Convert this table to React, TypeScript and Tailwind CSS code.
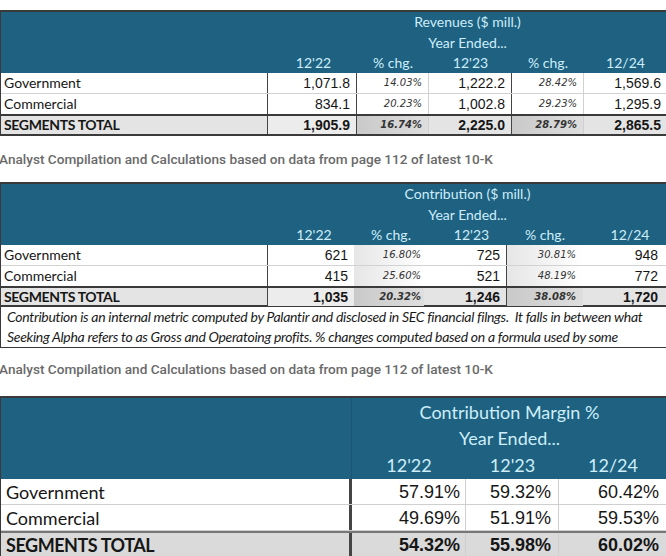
import React from "react";

type Row = { label: string; vals: string[]; pcts: string[] };

const revenues: Row[] = [
  { label: "Government", vals: ["1,071.8", "1,222.2", "1,569.6"], pcts: ["14.03%", "28.42%"] },
  { label: "Commercial", vals: ["834.1", "1,002.8", "1,295.9"], pcts: ["20.23%", "29.23%"] },
  { label: "SEGMENTS TOTAL", vals: ["1,905.9", "2,225.0", "2,865.5"], pcts: ["16.74%", "28.79%"] },
];

const contribution: Row[] = [
  { label: "Government", vals: ["621", "725", "948"], pcts: ["16.80%", "30.81%"] },
  { label: "Commercial", vals: ["415", "521", "772"], pcts: ["25.60%", "48.19%"] },
  { label: "SEGMENTS TOTAL", vals: ["1,035", "1,246", "1,720"], pcts: ["20.32%", "38.08%"] },
];

const margins = [
  { label: "Government", vals: ["57.91%", "59.32%", "60.42%"] },
  { label: "Commercial", vals: ["49.69%", "51.91%", "59.53%"] },
  { label: "SEGMENTS TOTAL", vals: ["54.32%", "55.98%", "60.02%"] },
];

const Caption = ({ className }: { className: string }) => (
  <p className={`flex items-center -ml-px font-['Roboto'] font-medium text-[13.6px] text-[#6a6a6a] whitespace-nowrap ${className}`}>
    Analyst Compilation and Calculations based on data from page 112 of latest 10-K
  </p>
);

const rowClass = (i: number, totalH: string) =>
  i === 2
    ? `${totalH} border-y-2 border-[#3a3a3a] bg-[#e4e4e4] font-bold`
    : i === 0
    ? "h-[21px] border-b border-[#d2d2d2]"
    : "h-[20px]";

const App: React.FC = () => {
  return (
    <div className="w-[666px] h-[556px] overflow-hidden bg-white text-[#161616]">
      {/* revenues */}
      <div className="mt-[10px] border-t-2 border-l border-[#3a3a3a]">
        <div className="grid grid-cols-[267px_89px_72px_83px_72px_83px] grid-rows-[20px_21px_20px] h-[61px] bg-[#1e6181] text-[#cdeefa] font-['Lato'] text-[14px] leading-[20px]">
          <div className="col-start-2 col-span-5 text-center">Revenues ($ mill.)</div>
          <div className="col-start-2 col-span-5 text-center leading-[21px]">Year Ended...</div>
          <div className="col-start-2 text-center pl-[2px]">12'22</div>
          <div className="text-center">% chg.</div>
          <div className="text-center">12'23</div>
          <div className="text-center">% chg.</div>
          <div className="text-center">12/24</div>
        </div>
        {revenues.map((r, i) => {
          const total = i === 2;
          return (
            <div key={r.label} className={`grid grid-cols-[267px_89px_72px_83px_72px_83px] leading-[18px] ${rowClass(i, "h-[22px]")}`}>
              <div className={`flex items-center pl-[3px] border-r border-[#444] font-['Lato'] text-[14px] ${total ? "tracking-tight" : ""}`}>{r.label}</div>
              <div className={`flex items-center justify-end pr-[6px] border-r border-[#444] font-['Liberation_Sans'] text-[14px] ${total ? "bg-[#ececec]" : ""}`}>{r.vals[0]}</div>
              <div className={`flex items-center justify-end pr-[6px] border-r border-[#d0d0d0] font-['DejaVu_Sans'] italic text-[10px] text-[#333] ${total ? "bg-gradient-to-r from-[#c9c9c9] to-[#dedede]" : ""}`}>{r.pcts[0]}</div>
              <div className="flex items-center justify-end pr-[6px] border-r border-[#444] font-['Liberation_Sans'] text-[14px]">{r.vals[1]}</div>
              <div className={`flex items-center justify-end pr-[6px] border-r border-[#d0d0d0] font-['DejaVu_Sans'] italic text-[10px] text-[#333] ${total ? "bg-gradient-to-r from-[#c9c9c9] to-[#dedede]" : ""}`}>{r.pcts[1]}</div>
              <div className="flex items-center justify-end pr-[6px] font-['Liberation_Sans'] text-[14px]">{r.vals[2]}</div>
            </div>
          );
        })}
      </div>

      <Caption className="h-[46px]" />

      {/* contribution */}
      <div className="border-t-2 border-l border-b border-[#3a3a3a]">
        <div className="grid grid-cols-[267px_86px_70px_83px_76px_84px] grid-rows-[21px_19px_21px] h-[61px] bg-[#1e6181] text-[#cdeefa] font-['Lato'] text-[14px] leading-[20px]">
          <div className="col-start-2 col-span-5 text-center">Contribution ($ mill.)</div>
          <div className="col-start-2 col-span-5 text-center">Year Ended...</div>
          <div className="col-start-2 text-center pl-[6px] pt-[1px]">12'22</div>
          <div className="text-center pl-[4px] pt-[1px]">% chg.</div>
          <div className="text-center pl-[12px] pt-[1px]">12'23</div>
          <div className="text-center pt-[1px]">% chg.</div>
          <div className="text-center pl-[10px] pt-[1px]">12/24</div>
        </div>
        {contribution.map((r, i) => {
          const total = i === 2;
          return (
            <div key={r.label} className={`grid grid-cols-[267px_86px_70px_83px_76px_84px] leading-[18px] ${rowClass(i, "h-[21px]")}`}>
              <div className={`flex items-center pl-[3px] border-r border-[#444] font-['Lato'] text-[14px] ${total ? "tracking-tight" : ""}`}>{r.label}</div>
              <div className={`flex items-center justify-end pr-[6px] font-['Liberation_Sans'] text-[14px] ${total ? "bg-[#ececec]" : ""}`}>{r.vals[0]}</div>
              <div className={`flex items-center justify-end pr-[3px] font-['DejaVu_Sans'] italic text-[10px] text-[#333] ${total ? "bg-gradient-to-r from-[#c9c9c9] to-[#dedede]" : "bg-gradient-to-r from-[#e6e6e6] to-white"}`}>{r.pcts[0]}</div>
              <div className="flex items-center justify-end pr-[6px] border-r border-[#444] font-['Liberation_Sans'] text-[14px]">{r.vals[1]}</div>
              <div className={`flex items-center justify-end pr-[7px] font-['DejaVu_Sans'] italic text-[10px] text-[#333] ${total ? "bg-gradient-to-r from-[#c9c9c9] to-[#dedede]" : "bg-gradient-to-r from-[#e6e6e6] to-white"}`}>{r.pcts[1]}</div>
              <div className="flex items-center justify-end pr-[9px] font-['Liberation_Sans'] text-[14px]">{r.vals[2]}</div>
            </div>
          );
        })}
        <div className="pl-[6px] font-['Lato'] italic text-[14px] leading-[20px] tracking-[-0.3px] whitespace-nowrap text-[#1a1a1a]">
          <div>Contribution is an internal metric computed by Palantir and disclosed in SEC financial filngs.&nbsp; It falls in between what</div>
          <div>Seeking Alpha refers to as Gross and Operatoing profits. % changes computed based on a formula used by some</div>
        </div>
      </div>

      <Caption className="h-[48px] pb-[6px]" />

      {/* contribution margin */}
      <div className="border-t-2 border-l border-[#3a3a3a]">
        <div className="grid grid-cols-[351px_114px_93px_108px] grid-rows-[27px_27px_27px] h-[81px] bg-[#1e6181] text-[#cdeefa] font-['Lato'] text-[18px] leading-[27px]">
          <div className="row-span-3 border-r border-[#1a5573]" />
          <div className="col-span-3 text-center pt-[1px]">Contribution Margin %</div>
          <div className="col-span-3 text-center">Year Ended...</div>
          <div className="text-center">12'22</div>
          <div className="text-center">12'23</div>
          <div className="text-center">12/24</div>
        </div>
        {margins.map((r, i) => {
          const total = i === 2;
          return (
            <div
              key={r.label}
              className={`grid grid-cols-[351px_114px_93px_108px] leading-[22px] ${
                total ? "h-[25px] border-t-2 border-[#777] bg-[#dadada] font-bold" : "h-[26px] border-b border-[#cfcfcf]"
              }`}
            >
              <div className={`flex items-center pl-[5px] border-r-[3px] border-[#444] font-['Lato'] text-[18px] ${total ? "tracking-tight" : ""}`}>{r.label}</div>
              <div className="flex items-center justify-end pr-[5px] border-r border-[#cfcfcf] font-['Liberation_Sans'] text-[18px]">{r.vals[0]}</div>
              <div className="flex items-center justify-end pr-[7px] border-r border-[#cfcfcf] font-['Liberation_Sans'] text-[18px]">{r.vals[1]}</div>
              <div className="flex items-center justify-end pr-[8px] font-['Liberation_Sans'] text-[18px]">{r.vals[2]}</div>
            </div>
          );
        })}
      </div>
    </div>
  );
};

export default App;
